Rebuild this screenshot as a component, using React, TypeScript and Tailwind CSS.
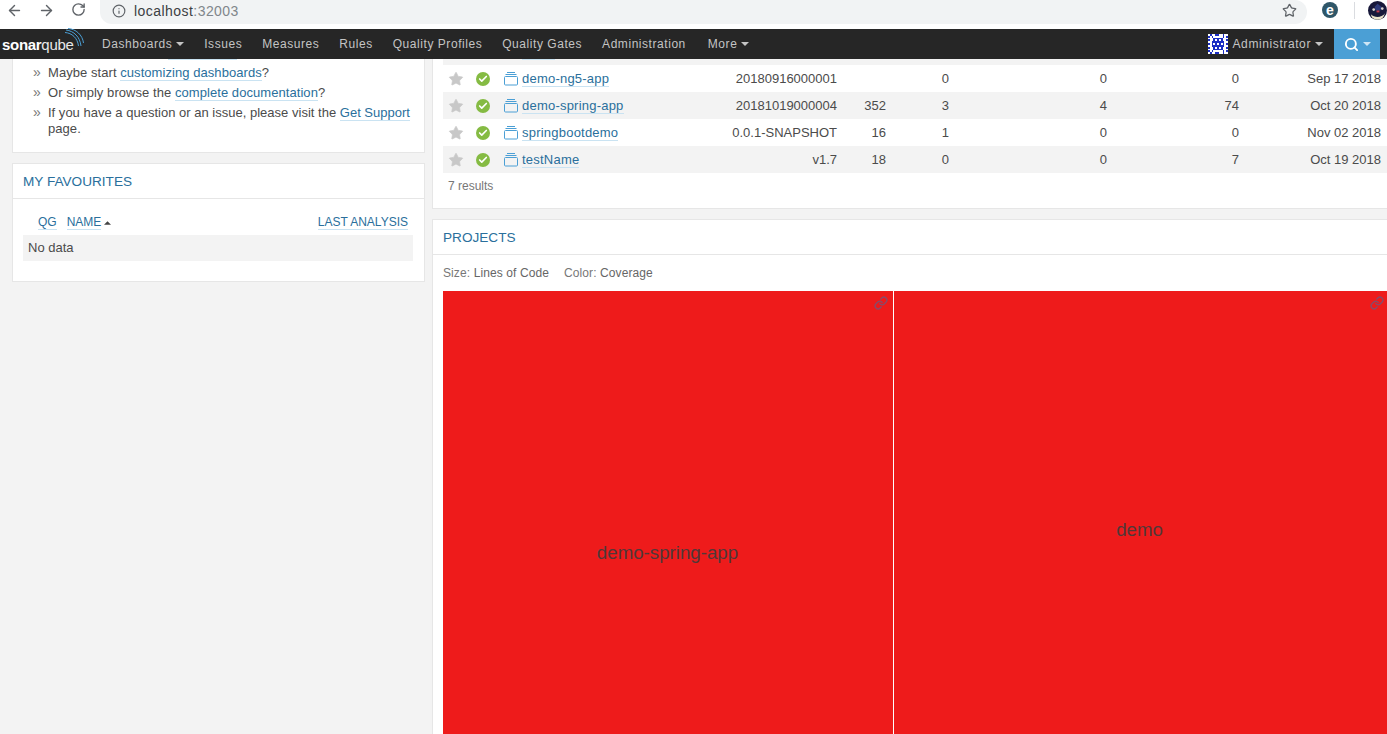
import { ArrowLeft, ArrowRight, RotateCw, Info, Star, Search, Link, Check } from 'lucide-react';

const projects = [
  { name: 'demo-ng5-app', version: '20180916000001', loc: '', bugs: '0', vulns: '0', smells: '0', date: 'Sep 17 2018' },
  { name: 'demo-spring-app', version: '20181019000004', loc: '352', bugs: '3', vulns: '4', smells: '74', date: 'Oct 20 2018' },
  { name: 'springbootdemo', version: '0.0.1-SNAPSHOT', loc: '16', bugs: '1', vulns: '0', smells: '0', date: 'Nov 02 2018' },
  { name: 'testName', version: 'v1.7', loc: '18', bugs: '0', vulns: '0', smells: '7', date: 'Oct 19 2018' },
];

const navItems = ['Issues', 'Measures', 'Rules', 'Quality Profiles', 'Quality Gates', 'Administration'];

function Caret({ className }: { className: string }) {
  return (
    <svg viewBox="0 0 8 4" className={className} fill="currentColor">
      <path d="M0 4 L4 0 L8 4 Z" />
    </svg>
  );
}

function CaretDown() {
  return <Caret className="ml-1 h-[4px] w-[8px] rotate-180" />;
}

function Logo() {
  return (
    <div className="relative flex w-[90px] items-center pl-[2px] text-[15px] leading-none tracking-[-0.3px] text-white">
      <span className="font-bold">sonar</span>
      <span className="font-normal text-[#e8e8e8]">qube</span>
      <svg viewBox="0 0 20 20" className="absolute left-[65px] top-[-9px] h-[20px] w-[20px]" fill="none" stroke="#4b9fd5" strokeWidth="1">
        <path d="M1 2 C9 3 15 9 16 18" />
        <path d="M3 0.5 C11 1 17.5 7 18.5 15" />
        <path d="M0 4.5 C7 5 12.5 10 13.5 18" />
      </svg>
    </div>
  );
}

function Identicon() {
  const rows = [
    '01001100100',
    '10100000101',
    '00011111000',
    '10010101001',
    '00111111100',
    '10101010101',
    '00111111100',
    '10010101001',
    '00011111000',
    '10100000101',
    '01001100100',
  ];
  return (
    <svg viewBox="0 0 11 11" className="mr-[5px] h-[20px] w-[20px] bg-white" shapeRendering="crispEdges">
      {rows.map((row, y) =>
        row.split('').map((c, x) => (c === '1' ? <rect key={`${x}-${y}`} x={x} y={y} width="1" height="1" fill="#1c2fc4" /> : null)),
      )}
    </svg>
  );
}

function Avatar() {
  return (
    <svg viewBox="0 0 20 20" className="ml-[13px] mt-px h-[19px] w-[19px] shrink-0">
      <circle cx="10" cy="10" r="10" fill="#17183a" />
      <path d="M3 14 C7 18 14 18 18 13 L16 17 C12 21 7 20 4 17 Z" fill="#e9e2c8" />
      <path d="M7 6 L10 3 L14 6 L13 10 L8 10 Z" fill="#2e3a7a" />
      <circle cx="6" cy="9" r="1.4" fill="#d9d4d0" />
      <circle cx="15" cy="8" r="1.4" fill="#d9d4d0" />
      <rect x="9" y="10" width="3" height="2" fill="#c23a4e" />
    </svg>
  );
}

function ProjectIcon() {
  return (
    <svg viewBox="0 0 14 14" className="h-[14px] w-[14px]" fill="none" stroke="#4b9fd5" strokeWidth="1">
      <rect x="0.5" y="4.5" width="13" height="8.5" rx="1" />
      <path d="M1.5 2.5 H12.5" />
      <path d="M3 0.5 H11" />
    </svg>
  );
}

function Bullet({ children }: { children: React.ReactNode }) {
  return (
    <li className="flex">
      <span className="w-[35px] pl-[20px] text-[14px] leading-[18px] text-[#777]">»</span>
      <span className="flex-1">{children}</span>
    </li>
  );
}

function DocLink({ children }: { children: React.ReactNode }) {
  return <a className="border-b border-[#cae3f2] text-[#2a6f9c]">{children}</a>;
}

export default function App() {
  return (
    <div className="h-screen overflow-hidden bg-[#f3f3f3] font-['Liberation_Sans',Arial,sans-serif] text-[13px] text-[#4b4b4b]">
      {/* browser chrome */}
      <div className="flex h-[29px] items-start bg-white pl-[6px]">
        <ArrowLeft className="mt-[2px] h-[17px] w-[17px] text-[#5f6368]" strokeWidth={2} />
        <ArrowRight className="ml-[15px] mt-[2px] h-[17px] w-[17px] text-[#5f6368]" strokeWidth={2} />
        <RotateCw className="ml-[16px] mt-[2px] h-[15px] w-[15px] text-[#5f6368]" strokeWidth={2.2} />
        <div className="ml-[14px] flex h-[24px] w-[1207px] items-center rounded-r-[12px] rounded-bl-[12px] bg-[#f1f3f4] pl-[12px] pr-[10px]">
          <Info className="mb-[3px] h-[14px] w-[14px] text-[#5f6368]" strokeWidth={2} />
          <span className="mb-[3px] ml-[8px] flex-1 text-[14px] leading-[18px] tracking-[0.45px] text-[#3c4043]">
            localhost<span className="text-[#80868b]">:32003</span>
          </span>
          <Star className="mb-[3px] h-[15px] w-[15px] text-[#5f6368]" strokeWidth={2} />
        </div>
        <div className="ml-[15px] mt-[2px] flex h-[16px] w-[16px] items-center justify-center rounded-full bg-[#2f5668] text-[14px] font-bold leading-none text-white">
          e
        </div>
        <div className="ml-[16px] mt-[2px] h-[17px] w-px bg-[#dadce0]" />
        <Avatar />
      </div>

      {/* sonarqube nav */}
      <nav className="flex h-[30px] items-center bg-[#262626] pr-[7px] text-[12px] tracking-[0.55px] text-[#c4c4c4]">
        <Logo />
        <div className="ml-[12px] flex items-center gap-[20px]">
          <span className="flex items-center">
            Dashboards
            <CaretDown />
          </span>
          {navItems.map((item) => (
            <span key={item}>{item}</span>
          ))}
          <span className="ml-[2px] flex items-center">
            More
            <CaretDown />
          </span>
        </div>
        <div className="ml-auto flex items-center">
          <Identicon />
          <span className="flex items-center tracking-[0.6px]">
            Administrator
            <CaretDown />
          </span>
          <div className="ml-[11px] flex h-[30px] w-[46px] items-center justify-center bg-[#4b9fd5] text-white">
            <Search className="h-[15px] w-[15px]" strokeWidth={3} />
            <Caret className="ml-[4px] h-[4px] w-[8px] rotate-180 text-[#cfe6f5]" />
          </div>
        </div>
      </nav>

      <div className="flex">
        {/* left column */}
        <div className="w-[432px] shrink-0 pl-[12px] pr-[7px]">
          <div className="h-[94px] border-x border-b border-[#e6e6e6] bg-white tracking-[0.06px]">
            <div className="ml-[155px] h-px w-[69px] bg-[#cae3f2]" />
            <ul className="mt-[3px] leading-[20px]">
              <Bullet>
                Maybe start <DocLink>customizing dashboards</DocLink>?
              </Bullet>
              <Bullet>
                Or simply browse the <DocLink>complete documentation</DocLink>?
              </Bullet>
              <Bullet>
                <span className="block leading-[20px] tracking-[0.01px]">
                  If you have a question or an issue, please visit the <DocLink>Get Support</DocLink>
                </span>
                <span className="block leading-[12px]">page.</span>
              </Bullet>
            </ul>
          </div>

          <div className="mt-[10px] h-[119px] border border-[#e6e6e6] bg-white">
            <h2 className="flex h-[35px] items-center border-b border-[#e6e6e6] px-[10px] pt-[2px] text-[13.6px] text-[#2a6f9c]">MY FAVOURITES</h2>
            <div className="flex h-[36px] items-end justify-between pb-[5px] pl-[25px] pr-[16px] text-[12px] leading-[14px] text-[#2a6f9c]">
              <div className="flex items-end gap-[10px]">
                <a className="border-b border-[#cae3f2]">QG</a>
                <span className="flex items-center">
                  <a className="border-b border-[#cae3f2]">NAME</a>
                  <Caret className="ml-[3px] h-[4px] w-[7px] text-[#444]" />
                </span>
              </div>
              <a className="border-b border-[#cae3f2]">LAST ANALYSIS</a>
            </div>
            <div className="ml-[10px] mr-[11px] flex h-[26px] items-center bg-[#f3f3f3] px-[5px] pb-[1px]">No data</div>
          </div>
        </div>

        {/* right column */}
        <div className="min-w-0 flex-1">
          <div className="h-[150px] border-b border-l border-[#e6e6e6] bg-white pl-[10px]">
            <div className="h-[6px] bg-[#f3f3f3] pl-[79px]">
              <div className="h-px w-[33px] bg-[#cae3f2]" />
            </div>
            {projects.map((p, i) => (
              <div
                key={p.name}
                className={`grid h-[27px] grid-cols-[26px_28px_20px_209px_112px_48px_63px_158px_132px_1fr] items-center pr-[6px] ${i % 2 === 1 ? 'bg-[#f3f3f3]' : ''}`}
              >
                <span className="pl-[5px]">
                  <Star className="h-[16px] w-[16px] fill-[#c8c8c8] text-[#c8c8c8]" strokeWidth={1} />
                </span>
                <span className="ml-[7px] flex h-[14px] w-[14px] items-center justify-center rounded-full bg-[#85bb43]">
                  <Check className="h-[10px] w-[10px] text-white" strokeWidth={4} />
                </span>
                <span className="pl-[7px]">
                  <ProjectIcon />
                </span>
                <span className="pl-[5px] tracking-[0.22px]">
                  <DocLink>{p.name}</DocLink>
                </span>
                <span className="pr-px text-right">{p.version}</span>
                <span className="text-right">{p.loc}</span>
                <span className="text-right">{p.bugs}</span>
                <span className="text-right">{p.vulns}</span>
                <span className="text-right">{p.smells}</span>
                <span className="text-right">{p.date}</span>
              </div>
            ))}
            <div className="pl-[5px] pt-[6px] text-[12px] leading-[14px] text-[#777]">7 results</div>
          </div>

          <div className="mt-[10px] border-l border-t border-[#e6e6e6] bg-white">
            <h2 className="flex h-[35px] items-center border-b border-[#e6e6e6] px-[10px] pt-[2px] text-[13.6px] text-[#2a6f9c]">PROJECTS</h2>
            <div className="flex h-[36px] items-center gap-[15px] px-[10px] text-[12px] tracking-[0.1px] text-[#777]">
              <span>
                Size: <span className="text-[#666]">Lines of Code</span>
              </span>
              <span>
                Color: <span className="text-[#666]">Coverage</span>
              </span>
            </div>
            <div className="flex items-start gap-px pl-[10px]">
              <div className="relative flex h-[524px] w-[450px] items-center justify-center bg-[#ee1b1b] pr-[1px] text-[18.7px] text-[#503838]">
                demo-spring-app
                <Link className="absolute right-[5px] top-[5px] h-[14px] w-[14px] text-[#8a4a68]" strokeWidth={2.5} />
              </div>
              <div className="relative flex h-[478px] flex-1 items-center justify-center bg-[#ee1b1b] pr-[2px] text-[18.7px] text-[#503838]">
                demo
                <Link className="absolute right-[3px] top-[5px] h-[14px] w-[14px] text-[#8a4a68]" strokeWidth={2.5} />
              </div>
            </div>
          </div>
        </div>
      </div>
    </div>
  );
}
